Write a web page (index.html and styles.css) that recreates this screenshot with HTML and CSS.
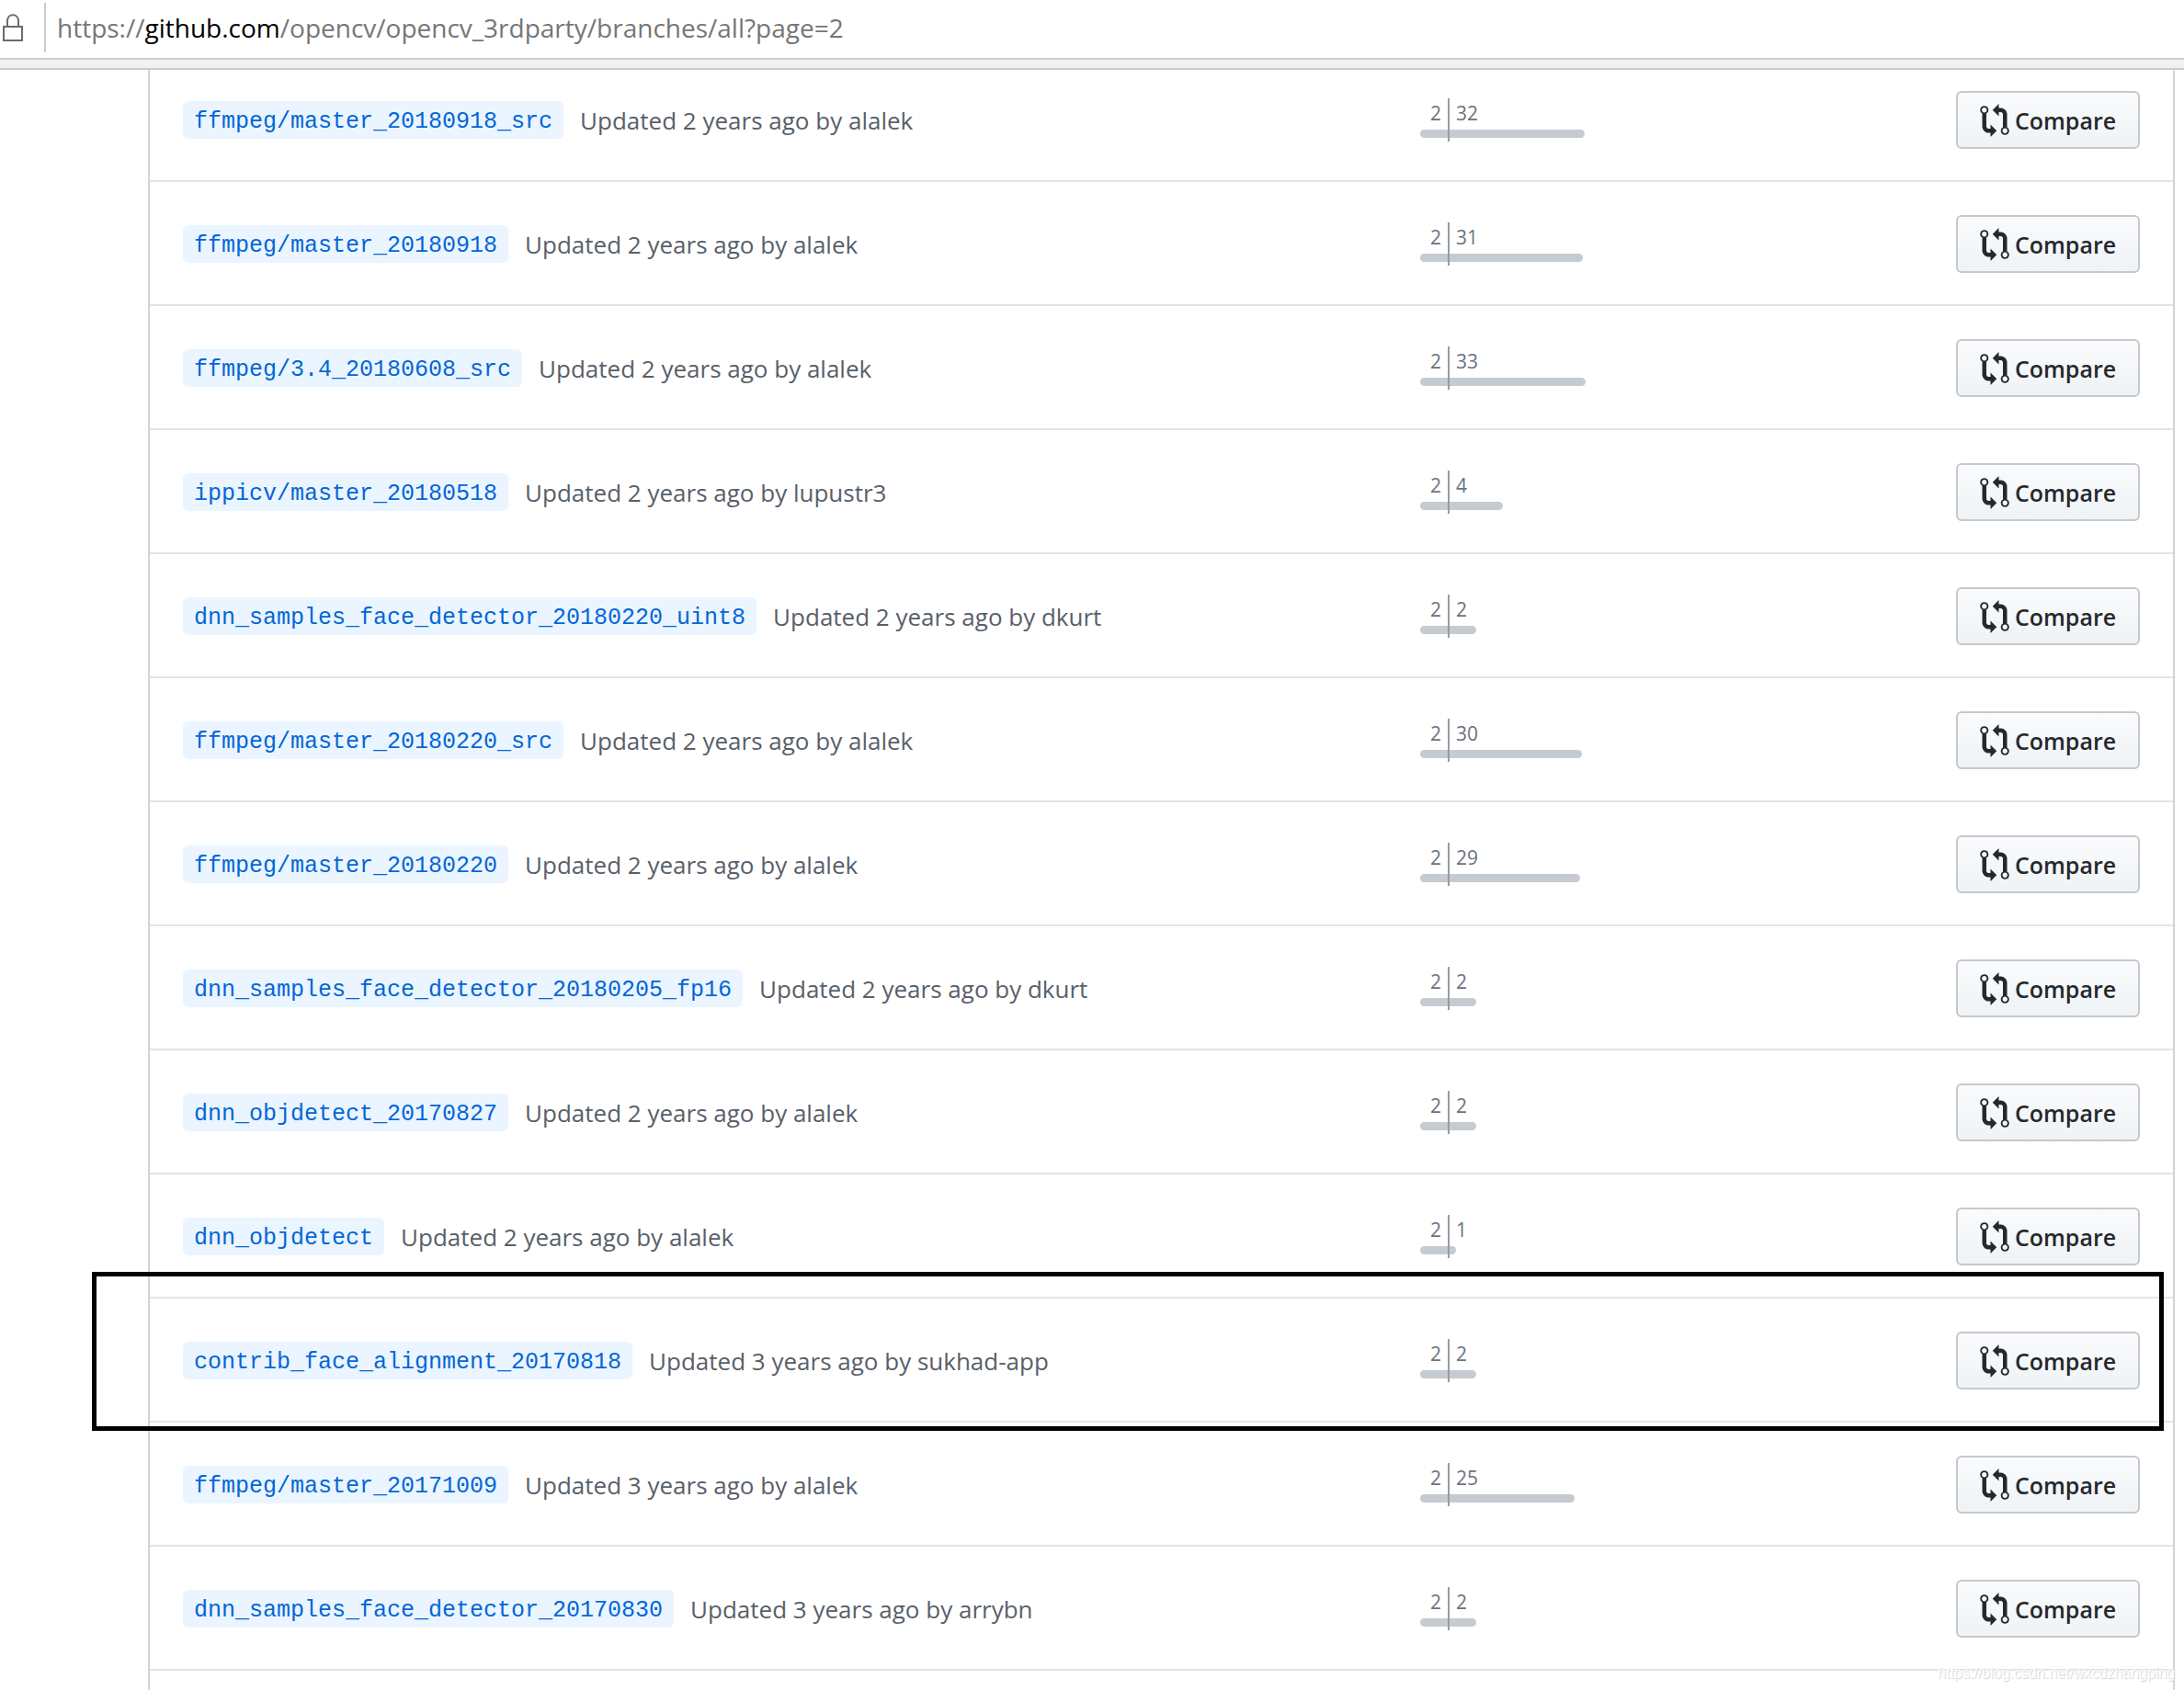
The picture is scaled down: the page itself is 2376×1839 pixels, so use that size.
FILE: index.html
```html
<!DOCTYPE html>
<html lang="en">
<head>
    <meta charset="UTF-8">
    <meta name="viewport" content="width=device-width, initial-scale=1.0">
    <title>Branches · opencv/opencv_3rdparty</title>
    <link rel="stylesheet" href="styles.css">
</head>
<body>
    <header class="address-bar">
        <svg class="lock" viewBox="0 0 24 30" aria-hidden="true">
            <path d="M2 14h20v15H2zM6 14V8c0-9 12-9 12 0v6"/>
        </svg>
        <div class="url">https://<span class="host">github.com</span>/opencv/opencv_3rdparty/branches/all?page=2</div>
    </header>
    <div class="toolbar-strip"></div>

    <main class="page">
        <ul class="branches" id="branches"></ul>
    </main>
    <div class="watermark">https://blog.csdn.net/wxcdzhangping</div>

    <script>
        const list = document.getElementById('branches');

        // width is the length of the bar right of the divider
        const branches = [
            { name: 'ffmpeg/master_20180918_src', years: 2, author: 'alalek', ahead: 32, width: 147 },
            { name: 'ffmpeg/master_20180918', years: 2, author: 'alalek', ahead: 31, width: 145 },
            { name: 'ffmpeg/3.4_20180608_src', years: 2, author: 'alalek', ahead: 33, width: 148 },
            { name: 'ippicv/master_20180518', years: 2, author: 'lupustr3', ahead: 4, width: 58 },
            { name: 'dnn_samples_face_detector_20180220_uint8', years: 2, author: 'dkurt', ahead: 2, width: 29 },
            { name: 'ffmpeg/master_20180220_src', years: 2, author: 'alalek', ahead: 30, width: 144 },
            { name: 'ffmpeg/master_20180220', years: 2, author: 'alalek', ahead: 29, width: 142 },
            { name: 'dnn_samples_face_detector_20180205_fp16', years: 2, author: 'dkurt', ahead: 2, width: 29 },
            { name: 'dnn_objdetect_20170827', years: 2, author: 'alalek', ahead: 2, width: 29 },
            { name: 'dnn_objdetect', years: 2, author: 'alalek', ahead: 1, width: 7 },
            { name: 'contrib_face_alignment_20170818', years: 3, author: 'sukhad-app', ahead: 2, width: 29, marked: true },
            { name: 'ffmpeg/master_20171009', years: 3, author: 'alalek', ahead: 25, width: 136 },
            { name: 'dnn_samples_face_detector_20170830', years: 3, author: 'arrybn', ahead: 2, width: 29 }
        ];

        const compareIcon = `<svg class="compare-icon" viewBox="0 0 14 16" aria-hidden="true"><path fill-rule="evenodd" d="M5 12H4c-.27-.02-.48-.11-.69-.31-.21-.2-.3-.42-.31-.69V4.72A1.993 1.993 0 0 0 2 1a1.993 1.993 0 0 0-1 3.72V11c.03.78.34 1.47.94 2.06.6.59 1.28.91 2.06.94h1v2l3-3-3-3v2zM2 1.8c.66 0 1.2.55 1.2 1.2 0 .65-.55 1.2-1.2 1.2C1.35 4.2.8 3.65.8 3c0-.65.55-1.2 1.2-1.2zm11 9.48V5c-.03-.78-.34-1.47-.94-2.06-.6-.59-1.28-.91-2.06-.94H9V0L6 3l3 3V4h1c.27.02.48.11.69.31.21.2.3.42.31.69v6.28A1.993 1.993 0 0 0 12 15a1.993 1.993 0 0 0 1-3.72zm-1 2.92c-.66 0-1.2-.55-1.2-1.2 0-.65.55-1.2 1.2-1.2.65 0 1.2.55 1.2 1.2 0 .65-.55 1.2-1.2 1.2z"/></svg>`;

        list.innerHTML = branches.map(branch => `
            <li class="branch${branch.marked ? ' marked' : ''}">
                <div class="branch-info">
                    <a class="branch-name" href="#">${branch.name}</a>
                    <span class="updated">Updated ${branch.years} years ago by ${branch.author}</span>
                </div>
                <div class="divergence">
                    <div class="side behind">
                        <span class="count">2</span>
                        <span class="meter"></span>
                    </div>
                    <div class="side ahead">
                        <span class="count">${branch.ahead}</span>
                        <span class="meter" style="width: ${branch.width}px"></span>
                    </div>
                </div>
                <button class="compare" type="button">${compareIcon}Compare</button>
            </li>`).join('');
    </script>
</body>
</html>
```
FILE: styles.css
```css
* {
    box-sizing: border-box;
}
body {
    display: flex;
    flex-direction: column;
    min-height: 100vh;
    margin: 0;
    background-color: #ffffff;
    color: #586069;
    font-family: "Open Sans", "Noto Sans", sans-serif;
    font-size: 26px;
}
.address-bar {
    display: flex;
    align-items: center;
    height: 63px;
    padding: 0 2px 4px;
}
.lock {
    width: 24px;
    height: 30px;
    fill: none;
    stroke: #6b6b6b;
    stroke-width: 2;
}
.url {
    height: 54px;
    margin-left: 22px;
    padding-left: 12px;
    border-left: 2px solid #cccccc;
    color: #767676;
    font-size: 28px;
    line-height: 54px;
}
.host {
    color: #000000;
}
.toolbar-strip {
    height: 13px;
    border-top: 2px solid #cccccc;
    border-bottom: 2px solid #cccccc;
    background-color: #f1f1f1;
}
.page {
    display: flex;
    flex: 1;
    padding: 0 10px 0 161px;
}
.branches {
    flex: 1;
    margin: 0;
    padding: 0;
    border: 2px solid #d1d5da;
    border-width: 0 2px;
    list-style: none;
}
.branch {
    position: relative;
    display: grid;
    grid-template-columns: 1fr 583px 200px;
    align-items: start;
    padding: 36px 36px 34px;
    border-bottom: 2px solid #e1e4e8;
}
.branch:first-child {
    padding-top: 23px;
}
.branch-info {
    display: flex;
    align-items: center;
    gap: 18px;
    height: 63px;
    white-space: nowrap;
}
.branch-name {
    padding: 4px 12px 0;
    border-radius: 6px;
    background-color: #eaf5ff;
    color: #0366d6;
    font-family: "Liberation Mono", monospace;
    font-size: 25px;
    line-height: 37px;
    text-decoration: none;
}
.branch-name:hover {
    text-decoration: underline;
}
.divergence {
    display: flex;
    padding-top: 8px;
    color: #6a737d;
    font-size: 21px;
}
.side {
    display: flex;
    flex-direction: column;
    height: 47px;
}
.count {
    height: 34px;
    padding: 0 7px;
    line-height: 32px;
}
.meter {
    height: 9px;
    background-color: #c6cbd1;
}
.behind {
    width: 32px;
    border-right: 2px solid #959da5;
    text-align: right;
}
.behind .meter {
    border-radius: 5px 0 0 5px;
}
.ahead .meter {
    border-radius: 0 5px 5px 0;
}
.compare {
    display: flex;
    align-items: center;
    justify-content: center;
    gap: 6px;
    height: 63px;
    padding: 0;
    border: 2px solid #c5c9cd;
    border-radius: 6px;
    background-image: linear-gradient(#fafbfc, #eff3f6);
    color: #24292e;
    font-family: inherit;
    font-size: 25px;
    font-weight: 600;
    cursor: pointer;
}
.compare:hover {
    background-image: linear-gradient(#f0f3f6, #e6ebf1);
}
.compare-icon {
    width: 32px;
    height: 36px;
    fill: currentColor;
}
/* black frame drawn over the highlighted row */
.marked::after {
    content: "";
    position: absolute;
    top: -29px;
    right: 10px;
    bottom: -11px;
    left: -63px;
    z-index: 1;
    border: 5px solid #000000;
    pointer-events: none;
}
.watermark {
    position: absolute;
    right: 10px;
    bottom: 8px;
    color: #ffffff;
    font-family: "Liberation Sans", Arial, sans-serif;
    font-size: 16px;
    line-height: 20px;
    text-shadow: 1px 1px 1px #d0d0d0;
}
```
